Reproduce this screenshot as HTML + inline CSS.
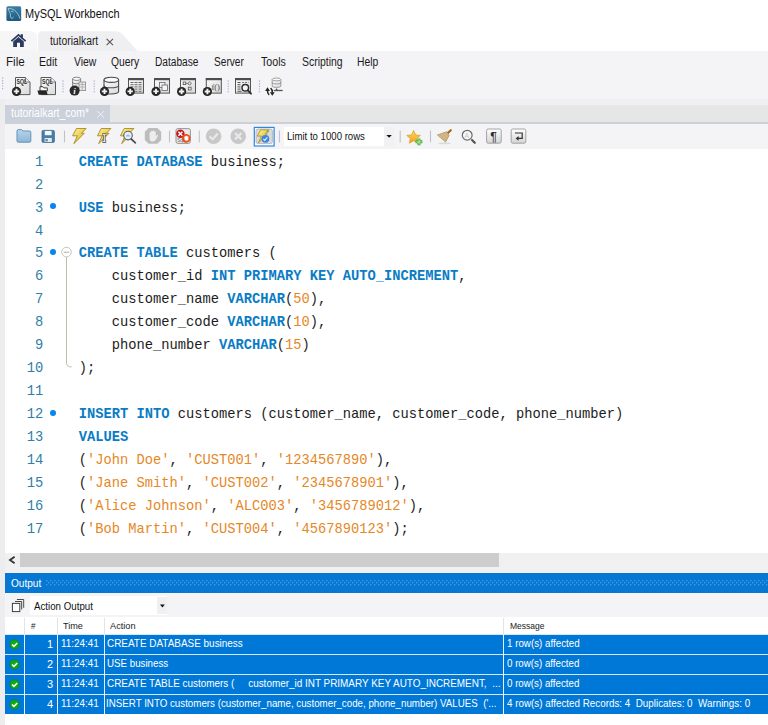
<!DOCTYPE html>
<html>
<head>
<meta charset="utf-8">
<title>MySQL Workbench</title>
<style>
html,body{margin:0;padding:0;}
body{width:768px;height:725px;position:relative;overflow:hidden;background:#fff;font-family:"Liberation Sans",sans-serif;font-size:12px;color:#1a1a1a;}
.abs{position:absolute;}
.t{position:absolute;white-space:pre;line-height:1;transform-origin:0 0;}
/* title */
#title{left:26px;top:8px;font-size:12px;color:#111;}
/* tabs */
#hometab{left:0;top:31px;width:36.8px;height:20px;background:#f6f6f7;border-top-right-radius:6px;}
#tab2{left:37px;top:31px;}
#tab2txt{left:50px;top:35px;font-size:12px;color:#222;}
#tab2x{left:105px;top:33px;font-size:14px;color:#555;}
/* menubar */
#menubar{left:0;top:51px;width:768px;height:48px;background:#f4f4f6;}
.menu{top:59px;font-size:12px;color:#1a1a1a;}
#strip0{left:0;top:99px;width:768px;height:6px;background:#f0f0f2;}
#strip1{left:5px;top:105px;width:763px;height:17px;background:#e6e6e6;}
#strip2{left:5px;top:122px;width:763px;height:2px;background:#cbd0da;}
#edtab{left:5px;top:105px;width:105px;height:17px;background:#cbd0da;}
#edtabtxt{left:11px;top:107px;font-size:11.5px;color:#fff;}
#edtabx{left:96px;top:105px;font-size:13px;color:#e9ecf2;}
#edtool{left:5px;top:124px;width:763px;height:25px;background:#f4f4f6;}
#leftstrip{left:0;top:99px;width:5px;height:626px;background:#ededef;}
/* editor */
#gutterL{display:none;}
#editor{left:5px;top:149px;width:763px;height:404px;background:#fff;}
.ln,.code{position:absolute;white-space:pre;font-family:"Liberation Mono",monospace;font-size:13.75px;line-height:23px;height:23px;}
.ln{color:#2f80a8;text-align:right;left:0;width:38.3px;}
.code{left:73.7px;color:#1c1c1c;}
.k{color:#0a7cc6;font-weight:bold;}
.n{color:#e6871f;}
.s{color:#e6871f;}
.dot{position:absolute;width:5.8px;height:5.8px;border-radius:50%;background:#0a84f0;left:45.2px;}
/* bottom */
#hscroll{left:5px;top:553px;width:768px;height:14px;background:#f0f0f0;}
#hthumb{left:20px;top:553px;width:479px;height:14px;background:#cdcdcd;}
#gap{left:5px;top:567px;width:763px;height:6px;background:#f1f1f1;}
#outleft{display:none;}
#outhdr{left:5px;top:573px;width:763px;height:20px;background:#0678d4;}
#outtxt{left:11px;top:577px;font-size:11.5px;color:#fff;}
#actrow{left:5px;top:593px;width:763px;height:24px;background:#f4f4f6;}
#combo{left:30px;top:596px;width:137px;height:19px;background:#fff;}
#combotxt{left:34px;top:600px;font-size:11px;color:#111;}
#tblhdr{left:5px;top:617px;width:763px;height:17px;background:#fff;}
.th{top:622px;font-size:9.5px;color:#222;}
.row{left:5px;width:763px;height:19px;background:#0078d7;}
.td{font-size:11px;color:#fff;}
#below{left:5px;top:714px;width:763px;height:11px;background:#fff;}
.vsep{position:absolute;top:634px;height:80px;width:1px;background:#e8f1fb;}
</style>
</head>
<body>
<!-- title bar -->
<svg class="abs" style="left:6px;top:6px" width="16" height="16" viewBox="0 0 16 16">
<defs><linearGradient id="gi" x1="0" y1="0" x2="0" y2="1"><stop offset="0" stop-color="#3b80a9"/><stop offset="1" stop-color="#1e597b"/></linearGradient></defs>
<rect x="0.4" y="0.2" width="14.8" height="14.8" rx="1.6" fill="url(#gi)"/>
<path d="M2.3 2.7 C3.5 2.1 6 2.5 8.5 4.3 C11 6.1 12.8 9 13.9 12.3 M2.3 2.7 C2.8 5 4 6.5 4.3 7.7 C4.6 9 4.3 10.5 4.9 11.6 C5.3 12.4 6 12.9 6.3 12.5 C6.7 12 6.4 11.4 7.2 11.2 M5.4 5.4 C6.2 5 7 5.3 7.4 5.9" fill="none" stroke="#b9d3e3" stroke-width="0.8" stroke-linecap="round"/>
</svg>
<div class="t" id="title" style="left:25.29px;top:7.84px;font-size:12px;transform:scaleX(0.9143)">MySQL Workbench</div>

<!-- tabs -->
<div class="abs" id="hometab"></div>
<svg class="abs" style="left:10px;top:33px" width="17" height="15" viewBox="0 0 17 15">
<path d="M8.5 0.8 L0.8 7.6 L2 8.8 L8.5 3 L15 8.8 L16.2 7.6 L12.9 4.7 L12.9 1.2 L10.7 1.2 L10.7 2.8 Z" fill="#2b3b5f"/>
<path d="M3.2 8.6 L8.5 4 L13.8 8.6 L13.8 14 L10 14 L10 9.8 L7 9.8 L7 14 L3.2 14 Z" fill="#2b3b5f"/>
</svg>
<svg class="abs" id="tab2" width="102" height="20" viewBox="0 0 102 20">
<path d="M1 20 L1 5 Q1 0.3 5.5 0.3 L79 0.3 Q83 0.3 85.5 3.2 L100.5 20 Z" fill="#efeff1"/>
</svg>
<div class="t" id="tab2txt" style="left:49.78px;top:34.84px;font-size:12px;transform:scaleX(0.8610)">tutorialkart</div>
<svg class="abs" style="left:105px;top:37px" width="10" height="10" viewBox="0 0 10 10"><path d="M1.6 1.8 L8 8.2 M8 1.8 L1.6 8.2" stroke="#555" stroke-width="1.1"/></svg>

<!-- menubar + toolbar -->
<div class="abs" id="menubar"></div>
<div class="t menu" style="left:5.83px;top:55.64px;font-size:12px;transform:scaleX(0.9690)">File</div>
<div class="t menu" style="left:38.72px;top:55.64px;font-size:12px;transform:scaleX(0.8810)">Edit</div>
<div class="t menu" style="left:73.70px;top:55.64px;font-size:12px;transform:scaleX(0.8660)">View</div>
<div class="t menu" style="left:111.07px;top:55.64px;font-size:12px;transform:scaleX(0.8594)">Query</div>
<div class="t menu" style="left:154.85px;top:55.64px;font-size:12px;transform:scaleX(0.8462)">Database</div>
<div class="t menu" style="left:214.28px;top:55.64px;font-size:12px;transform:scaleX(0.8432)">Server</div>
<div class="t menu" style="left:261.38px;top:55.64px;font-size:12px;transform:scaleX(0.8881)">Tools</div>
<div class="t menu" style="left:301.57px;top:55.64px;font-size:12px;transform:scaleX(0.8681)">Scripting</div>
<div class="t menu" style="left:357.14px;top:55.64px;font-size:12px;transform:scaleX(0.8602)">Help</div>
<!--TB1S-->
<svg class="abs" style="left:0;top:72px" width="768" height="30" viewBox="0 72 768 30">
<defs>
<linearGradient id="gd" x1="0" y1="0" x2="1" y2="1"><stop offset="0" stop-color="#fbfbfb"/><stop offset="1" stop-color="#d9d9d9"/></linearGradient>
<g id="plus"><circle r="4.6" fill="#262626"/><path d="M-2.7 0 H2.7 M0 -2.7 V2.7" stroke="#f2f2f2" stroke-width="1.9"/></g>
<g id="cyl"><path d="M0 2.6 V14.2 C0 17.6 14.6 17.6 14.6 14.2 V2.6" fill="url(#gd)" stroke="#4a4a4a" stroke-width="1.1"/><ellipse cx="7.3" cy="2.6" rx="7.3" ry="2.6" fill="#fafafa" stroke="#4a4a4a" stroke-width="1.1"/><path d="M0 8.2 C0 11.4 14.6 11.4 14.6 8.2" fill="none" stroke="#4a4a4a" stroke-width="1.1"/></g>
<g id="win"><rect x="0.5" y="0.5" width="15" height="14.6" fill="url(#gd)" stroke="#555" stroke-width="1"/><rect x="0" y="0" width="16" height="2.2" fill="#4d4d4d"/></g>
</defs>
<!-- grips / separators -->
<g stroke="#9fb4cc" stroke-width="1.2" stroke-dasharray="1.2 1.4">
<path d="M2.6 77.6 V90.5"/><path d="M63 80.6 V93"/><path d="M94.2 80.6 V93"/><path d="M228.2 80.6 V93"/><path d="M259.5 80.6 V93"/>
</g>
<!-- 1: SQL doc + -->
<path d="M15.5 77.5 H25.5 L30 82 V94.6 H15.5 Z" fill="url(#gd)" stroke="#5a5a5a" stroke-width="1"/>
<path d="M25.5 77.5 V82 H30" fill="#eee" stroke="#5a5a5a" stroke-width="0.8"/>
<text x="16.5" y="84.4" font-family="Liberation Sans, sans-serif" font-weight="bold" font-size="6.8" fill="#2a2a2a" textLength="10.6" lengthAdjust="spacingAndGlyphs">SQL</text>
<use href="#plus" x="16.5" y="91.4"/>
<!-- 2: SQL doc folder -->
<path d="M41 77.5 H51 L55.5 82 V94.6 H41 Z" fill="url(#gd)" stroke="#5a5a5a" stroke-width="1"/>
<path d="M51 77.5 V82 H55.5" fill="#eee" stroke="#5a5a5a" stroke-width="0.8"/>
<text x="42" y="84.4" font-family="Liberation Sans, sans-serif" font-weight="bold" font-size="6.8" fill="#2a2a2a" textLength="10.6" lengthAdjust="spacingAndGlyphs">SQL</text>
<path d="M40 91 V86.7 H43 L43.9 87.9 H47.3 V91 Z" fill="#fafafa" stroke="#2a2a2a" stroke-width="0.9"/>
<path d="M37.4 90.6 H46.4 L47.7 94.7 H38.7 Z" fill="#262626"/>
<!-- 3: db info -->
<g transform="translate(72.6 77.2) scale(0.55 0.62)"><use href="#cyl"/></g>
<rect x="79" y="82" width="6.6" height="8.6" fill="#e9e9e9" stroke="#8a8a8a" stroke-width="0.8"/>
<path d="M79 84.5 H85.6 M79 87 H85.6 M82.3 82 V90.6" stroke="#9a9a9a" stroke-width="0.6"/>
<circle cx="74.6" cy="90.6" r="5" fill="#2b2b2b"/>
<text x="73.2" y="93.9" font-family="Liberation Serif, serif" font-style="italic" font-weight="bold" font-size="9" fill="#f4f4f4">i</text>
<!-- 4: db + -->
<g transform="translate(104 77.2)"><use href="#cyl"/></g>
<use href="#plus" x="104.5" y="91.4"/>
<!-- 5: table + -->
<g transform="translate(128 78)"><use href="#win"/></g>
<path d="M130.5 82.5 H141.5 M130.5 84.7 H141.5 M130.5 86.9 H141.5 M130.5 89.1 H141.5 M130.5 91.3 H141.5" stroke="#6a6a6a" stroke-width="1" stroke-dasharray="3 1"/>
<use href="#plus" x="130.2" y="91.4"/>
<!-- 6: view + -->
<g transform="translate(154 78)"><use href="#win"/></g>
<rect x="159.5" y="82.5" width="5.5" height="5" fill="#f4f4f4" stroke="#666" stroke-width="0.8"/>
<rect x="162" y="85" width="5.5" height="5.5" fill="#f4f4f4" stroke="#666" stroke-width="0.8"/>
<use href="#plus" x="156" y="91.4"/>
<!-- 7: procedure + -->
<g transform="translate(180 78)"><use href="#win"/></g>
<rect x="183.2" y="82" width="2.6" height="2.6" fill="none" stroke="#555" stroke-width="0.8"/>
<circle cx="189.6" cy="83.4" r="1.5" fill="none" stroke="#555" stroke-width="0.8"/>
<rect x="188.3" y="87.2" width="2.8" height="2.8" fill="none" stroke="#555" stroke-width="0.8"/>
<path d="M185.8 83.4 H188" stroke="#555" stroke-width="0.7"/>
<use href="#plus" x="181.6" y="91.5"/>
<!-- 8: function + -->
<g transform="translate(205.8 78)"><use href="#win"/></g>
<text x="211.4" y="89.6" font-family="Liberation Serif, serif" font-size="7.6" fill="#4a4a4a" textLength="8.6" lengthAdjust="spacingAndGlyphs">f()</text>
<use href="#plus" x="207.4" y="91.5"/>
<!-- 9: search table -->
<g transform="translate(235 78)"><use href="#win"/></g>
<path d="M237.5 82.5 H240.5 M237.5 84.7 H240.5 M237.5 86.9 H240.5 M237.5 89.1 H240.5 M237.5 91.3 H241.5" stroke="#555" stroke-width="1"/>
<path d="M242 82.5 H248.5" stroke="#777" stroke-width="1" stroke-dasharray="2 1"/>
<circle cx="245.3" cy="87.8" r="3.3" fill="#f6f6f6" stroke="#2e2e2e" stroke-width="1.5"/>
<path d="M247.8 90.4 L251 93.6" stroke="#2e2e2e" stroke-width="2" stroke-linecap="round"/>
<!-- 10: reconnect -->
<g transform="translate(272.2 78) scale(0.59 0.56)" opacity="0.8"><use href="#cyl"/></g>
<path d="M273.8 90.5 H282.7" stroke="#555" stroke-width="1.3"/>
<path d="M275.2 90.6 L276.6 88 L278 90.6 Z" fill="#555"/>
<path d="M265.1 90.9 L267.5 87.2 L269.9 90.9 Z" fill="#222"/>
<path d="M267.5 90.4 Q267.4 93.4 269.2 94.8" fill="none" stroke="#222" stroke-width="1.5"/>
<path d="M269.9 92.2 L272.3 95.8 L274.7 92.2 Z" fill="#222"/>
<path d="M272.3 92.6 Q272.4 89.6 270.6 88.2" fill="none" stroke="#222" stroke-width="1.5"/>
</svg>
<!--TB1E-->

<div class="abs" id="strip0"></div>
<div class="abs" id="leftstrip"></div>
<div class="abs" id="strip1"></div>
<div class="abs" id="edtab"></div>
<div class="t" id="edtabtxt" style="left:11.03px;top:106.84px;font-size:12px;transform:scaleX(0.8659)">tutorialkart_com*</div>
<svg class="abs" style="left:95px;top:109px" width="11" height="10" viewBox="0 0 11 10"><path d="M2.2 2 L9 8.6 M9 2 L2.2 8.6" stroke="#eef0f5" stroke-width="1"/></svg>
<div class="abs" id="strip2"></div>
<div class="abs" id="edtool"></div>
<!--TB2S-->
<svg class="abs" style="left:0;top:124px" width="768" height="25" viewBox="0 124 768 25">
<defs>
<linearGradient id="gbolt" x1="0" y1="0" x2="1" y2="1"><stop offset="0" stop-color="#fff3a0"/><stop offset="0.5" stop-color="#edd050"/><stop offset="1" stop-color="#c9a227"/></linearGradient>
<linearGradient id="gfold" x1="0" y1="0" x2="0" y2="1"><stop offset="0" stop-color="#b9d5ea"/><stop offset="1" stop-color="#8db6d6"/></linearGradient>
<linearGradient id="gbtn" x1="0" y1="0" x2="0" y2="1"><stop offset="0" stop-color="#ffffff"/><stop offset="1" stop-color="#d4d4d4"/></linearGradient>
<linearGradient id="gstar" x1="0" y1="0" x2="0" y2="1"><stop offset="0" stop-color="#ffd95a"/><stop offset="1" stop-color="#f0a020"/></linearGradient>
<g id="bolt"><path d="M4.6 0.5 H14.3 L9.7 5.3 H12.4 L2.1 15.7 L5.5 7.8 H0.8 Z" fill="url(#gbolt)" stroke="#a8892c" stroke-width="0.9" stroke-linejoin="round"/></g>
</defs>
<!-- separators -->
<g stroke="#c2c2c4" stroke-width="1.1">
<path d="M64.5 130.6 V142.4"/><path d="M169.5 130.6 V142.4"/><path d="M199.3 130.6 V142.4"/><path d="M279.4 130.6 V142.4"/><path d="M400.2 130.6 V142.4"/><path d="M430.5 130.6 V142.4"/>
</g>
<!-- folder -->
<path d="M17 131 Q17 129.6 18.4 129.6 H21.6 L23 131 H29.6 Q30.8 131 30.8 132.2 V141 Q30.8 142.2 29.6 142.2 H18.2 Q17 142.2 17 141 Z" fill="url(#gfold)" stroke="#6393ba" stroke-width="1"/>
<!-- save -->
<rect x="42" y="130.4" width="12.4" height="12" rx="1.2" fill="#4b7ea6" stroke="#3c6c92" stroke-width="0.8"/>
<rect x="44.8" y="131" width="6.8" height="4.2" fill="#f4f7fa"/>
<rect x="44.6" y="138" width="7.2" height="4" fill="#e6e9ec"/>
<rect x="45.4" y="139" width="2.4" height="2.4" fill="#6a8aa6"/>
<!-- bolt 1 -->
<g transform="translate(71.8 128)"><use href="#bolt"/></g>
<!-- bolt 2 with I -->
<g transform="translate(96.6 128)"><use href="#bolt"/></g>
<path d="M102.4 134.6 H106.2 M104.3 134.6 V141.6 M102.4 141.6 H106.2" stroke="#5a5a5a" stroke-width="2.6" fill="none"/>
<path d="M102.9 134.6 H105.7 M104.3 134.6 V141.6 M102.9 141.6 H105.7" stroke="#f2f2f2" stroke-width="1" fill="none"/>
<!-- bolt 3 with magnifier -->
<g transform="translate(119.6 128)"><use href="#bolt"/></g>
<circle cx="128" cy="135.6" r="4.3" fill="#e2eefa" stroke="#5c5c5c" stroke-width="1.1"/>
<path d="M125.6 136.6 Q128 132.6 130.4 136.6" fill="#8fbce6" stroke="none"/>
<path d="M131.2 139 L135.4 142.8" stroke="#4c4c4c" stroke-width="1.7" stroke-linecap="round"/>
<!-- stop (disabled) -->
<path d="M148.6 128 H157.4 L161.2 131.8 V140 L157.4 143.8 H148.6 L144.8 140 V131.8 Z" fill="#bdbdbd"/>
<path d="M149.6 137 V132.4 Q150.3 131.6 151 132.4 V131.2 Q151.8 130.4 152.6 131.2 V131 Q153.4 130.2 154.2 131 V131.8 Q155 131 155.8 131.8 V136.4 L157 134.8 Q158 134.4 158 135.6 L156 139.6 Q155 141.4 153 141.4 H152 Q149.6 141.4 149.6 139 Z" fill="#ededed"/>
<!-- stop on error toggle -->
<rect x="176" y="128.6" width="14.4" height="14.8" rx="1.8" fill="#e9e9e9" stroke="#8c8c8c" stroke-width="0.9"/>
<text x="177" y="141.8" font-family="Liberation Sans, sans-serif" font-size="5" fill="#777">Sql</text>
<circle cx="180.4" cy="133.7" r="4.2" fill="#c4141c"/>
<path d="M178.4 131.8 L182.4 135.8 M182.4 131.8 L178.4 135.8" stroke="#fff" stroke-width="1.5"/>
<circle cx="186.2" cy="138.4" r="4.3" fill="#e8501c"/>
<path d="M184.4 139 V136.6 H185.4 V136 H186.4 V135.8 H187.4 V136.4 H188.4 V139.4 Q188.4 140.8 186.6 140.8 Q184.4 140.8 184.4 139 Z" fill="#fff"/>
<!-- check / x disabled -->
<circle cx="213.6" cy="136.2" r="7.8" fill="#c8c8c8"/>
<path d="M209.6 136.4 L212.6 139.2 L217.8 133.4" fill="none" stroke="#e8e8e8" stroke-width="2.2"/>
<circle cx="238.2" cy="136.2" r="7.8" fill="#c8c8c8"/>
<path d="M235 133 L241.4 139.4 M241.4 133 L235 139.4" stroke="#e8e8e8" stroke-width="2.2"/>
<!-- toggle autocommit -->
<rect x="254.3" y="127.4" width="19.8" height="18.6" fill="#fff" stroke="#2f86e2" stroke-width="1.2"/>
<rect x="256" y="129" width="16.4" height="14.6" rx="2" fill="#dadada" stroke="#b4b4b4" stroke-width="0.9"/>
<g transform="translate(256.6 129.4) scale(0.86)"><use href="#bolt"/></g>
<circle cx="267.8" cy="131.6" r="1.1" fill="#4ec04a"/>
<circle cx="265.4" cy="138.8" r="3.9" fill="#3a86e0"/>
<path d="M263.4 139 L264.8 140.4 L267.4 137.4" fill="none" stroke="#dfeeff" stroke-width="1.2"/>
<!-- combo -->
<rect x="283.8" y="127" width="111" height="19" fill="#fff"/>
<rect x="384" y="127" width="10.8" height="19" fill="#f1f1f1"/>
<path d="M386.4 135 H391.8 L389.1 137.8 Z" fill="#111"/>
<!-- star + -->
<path d="M413.6 130.4 L415.6 135 L420.4 135.4 L416.8 138.6 L417.9 143.2 L413.6 140.7 L409.3 143.2 L410.4 138.6 L406.8 135.4 L411.6 135 Z" fill="url(#gstar)" stroke="#d89a1c" stroke-width="0.7" stroke-linejoin="round"/>
<path d="M419 138.4 V145.2 M415.6 141.8 H422.4" stroke="#4aa83c" stroke-width="3"/>
<path d="M419 139.2 V144.4 M416.4 141.8 H421.6" stroke="#a8e494" stroke-width="1.3"/>
<!-- broom -->
<ellipse cx="444.5" cy="143.3" rx="6.5" ry="0.9" fill="#d9d9d9"/>
<path d="M447.2 133.6 L450.8 130.2" stroke="#a86a1c" stroke-width="2.2" stroke-linecap="round"/>
<path d="M437.4 135 L446.6 131.8 L449.2 135.2 L445.6 142 Z" fill="#d8bd8c" stroke="#a8895a" stroke-width="0.7" stroke-linejoin="round"/>
<path d="M440 134.4 L446 140.6 M442.4 133.6 L447 138.4 M444.6 132.8 L448 136.4" stroke="#b2925e" stroke-width="0.6"/>
<!-- find magnifier -->
<circle cx="467.2" cy="135.2" r="4.9" fill="#f8f8f8" stroke="#6a6a6a" stroke-width="1.2"/>
<text x="464.6" y="138" font-family="Liberation Sans, sans-serif" font-size="7" fill="#c4c4c4">A</text>
<path d="M470.6 138.8 L472.4 140.4" stroke="#d8a060" stroke-width="1.8"/>
<path d="M472.2 140.2 L474.8 142.8" stroke="#555" stroke-width="2.2" stroke-linecap="round"/>
<!-- pilcrow button -->
<rect x="486.6" y="129" width="14.6" height="14.2" rx="1.6" fill="url(#gbtn)" stroke="#9a9a9a" stroke-width="0.9"/>
<text x="490.2" y="140.8" font-family="Liberation Sans, sans-serif" font-size="12.5" fill="#2a2a2a">¶</text>
<!-- wrap button -->
<rect x="511.2" y="129" width="14.6" height="14.2" rx="1.6" fill="url(#gbtn)" stroke="#9a9a9a" stroke-width="0.9"/>
<path d="M515 133 H522.2 V138.4 H518" fill="none" stroke="#333" stroke-width="1.2"/>
<path d="M518.6 136 V140.8 L515.6 138.4 Z" fill="#333"/>
</svg>
<div class="t" id="limittxt" style="left:287.33px;top:130.94px;font-size:11px;color:#111;transform:scaleX(0.8727)">Limit to 1000 rows</div>
<!--TB2E-->

<!-- editor -->
<div class="abs" id="gutterL"></div>
<div class="abs" id="editor">
<div class="ln" style="top:1.75px">1</div>
<div class="code" style="top:1.75px"><span class="k">CREATE DATABASE</span> business;</div>
<div class="ln" style="top:24.68px">2</div>
<div class="ln" style="top:47.61px">3</div>
<div class="code" style="top:47.61px"><span class="k">USE</span> business;</div>
<div class="dot" style="top:54.36px"></div>
<div class="ln" style="top:70.54px">4</div>
<div class="ln" style="top:93.47px">5</div>
<div class="code" style="top:93.47px"><span class="k">CREATE TABLE</span> customers (</div>
<div class="dot" style="top:100.22px"></div>
<div class="ln" style="top:116.40px">6</div>
<div class="code" style="top:116.40px">    customer_id <span class="k">INT PRIMARY KEY AUTO_INCREMENT</span>,</div>
<div class="ln" style="top:139.33px">7</div>
<div class="code" style="top:139.33px">    customer_name <span class="k">VARCHAR</span>(<span class="n">50</span>),</div>
<div class="ln" style="top:162.26px">8</div>
<div class="code" style="top:162.26px">    customer_code <span class="k">VARCHAR</span>(<span class="n">10</span>),</div>
<div class="ln" style="top:185.19px">9</div>
<div class="code" style="top:185.19px">    phone_number <span class="k">VARCHAR</span>(<span class="n">15</span>)</div>
<div class="ln" style="top:208.12px">10</div>
<div class="code" style="top:208.12px">);</div>
<div class="ln" style="top:231.05px">11</div>
<div class="ln" style="top:253.98px">12</div>
<div class="code" style="top:253.98px"><span class="k">INSERT INTO</span> customers (customer_name, customer_code, phone_number)</div>
<div class="dot" style="top:260.73px"></div>
<div class="ln" style="top:276.91px">13</div>
<div class="code" style="top:276.91px"><span class="k">VALUES</span></div>
<div class="ln" style="top:299.84px">14</div>
<div class="code" style="top:299.84px">(<span class="s">'John Doe'</span>, <span class="s">'CUST001'</span>, <span class="s">'1234567890'</span>),</div>
<div class="ln" style="top:322.77px">15</div>
<div class="code" style="top:322.77px">(<span class="s">'Jane Smith'</span>, <span class="s">'CUST002'</span>, <span class="s">'2345678901'</span>),</div>
<div class="ln" style="top:345.70px">16</div>
<div class="code" style="top:345.70px">(<span class="s">'Alice Johnson'</span>, <span class="s">'ALC003'</span>, <span class="s">'3456789012'</span>),</div>
<div class="ln" style="top:368.63px">17</div>
<div class="code" style="top:368.63px">(<span class="s">'Bob Martin'</span>, <span class="s">'CUST004'</span>, <span class="s">'4567890123'</span>);</div>
<svg class="abs" style="left:55px;top:96px" width="14" height="126" viewBox="60 245 14 126">
<path d="M66.5 257 V363.6 Q66.5 365 68 365.8 L69.4 366.8 H71.6" fill="none" stroke="#bcbcb0" stroke-width="1"/>
<circle cx="66.5" cy="252.1" r="4.8" fill="#fff" stroke="#c6c6ba" stroke-width="1"/>
<path d="M63.8 252.2 H69.3" stroke="#b0b0a6" stroke-width="1"/>
</svg>
</div>

<!-- bottom -->
<div class="abs" id="hscroll"></div>
<div class="abs" id="hthumb"></div>
<div class="abs" id="gap"></div>
<div class="abs" id="outleft"></div>
<div class="abs" id="outhdr"></div>
<div class="t" id="outtxt" style="left:10.84px;top:577.69px;font-size:11px;transform:scaleX(0.9138)">Output</div>
<div class="abs" id="actrow"></div>
<div class="abs" id="combo"></div>
<div class="t" id="combotxt" style="left:34.00px;top:600.69px;font-size:11px;transform:scaleX(0.8839)">Action Output</div>
<svg class="abs" style="left:8px;top:555px" width="8" height="10" viewBox="0 0 8 10"><path d="M6.6 1.8 L2 5.1 L6.6 8.3" fill="none" stroke="#333" stroke-width="1.8"/></svg>
<svg class="abs" style="left:46px;top:580px" width="722" height="6" viewBox="0 0 722 6">
<defs><pattern id="dots" x="0" y="0" width="4" height="4" patternUnits="userSpaceOnUse"><rect x="0" y="0" width="1.4" height="1.4" fill="#4496e0"/><rect x="2" y="2" width="1.4" height="1.4" fill="#4496e0"/></pattern></defs>
<rect x="0" y="0" width="722" height="6" fill="url(#dots)"/></svg>
<svg class="abs" style="left:11px;top:598px" width="14" height="15" viewBox="0 0 14 15">
<path d="M5.9 1.5 H12.7 V9.8" fill="none" stroke="#4a4a4a" stroke-width="1"/>
<path d="M4 3.5 H10.7 V11.5" fill="none" stroke="#444" stroke-width="1"/>
<rect x="1.4" y="5.4" width="7.4" height="8.2" fill="#fdfdfd" stroke="#3c3c3c" stroke-width="1"/>
</svg>
<div class="abs" style="left:157px;top:597px;width:10px;height:17px;background:#f0f0f0"></div>
<svg class="abs" style="left:160px;top:604px" width="6" height="4" viewBox="0 0 6 4"><path d="M0 0.5 H4.8 L2.4 3.4 Z" fill="#111"/></svg>
<div class="abs" id="tblhdr"></div>
<div class="t th" style="left:30.50px;top:622.08px;font-size:9px;transform:scaleX(0.9000)">#</div>
<div class="t th" style="left:63.05px;top:622.08px;font-size:9px;transform:scaleX(1.0105)">Time</div>
<div class="t th" style="left:110.00px;top:622.08px;font-size:9px;transform:scaleX(1.0204)">Action</div>
<div class="t th" style="left:509.99px;top:622.08px;font-size:9px;transform:scaleX(0.9465)">Message</div>
<div class="abs" style="left:24px;top:618px;width:1px;height:17px;background:#e3e3e3"></div>
<div class="abs" style="left:57px;top:618px;width:1px;height:17px;background:#e3e3e3"></div>
<div class="abs" style="left:104px;top:618px;width:1px;height:17px;background:#e3e3e3"></div>
<div class="abs" style="left:503px;top:618px;width:1px;height:17px;background:#e3e3e3"></div>
<div class="abs" style="left:5px;top:634px;width:763px;height:80px;background:#d6e8f9"></div>
<div class="abs row" style="top:635px"></div>
<svg class="abs" style="left:8.7px;top:639px" width="11" height="11" viewBox="0 0 11 11"><circle cx="5.5" cy="5.4" r="4.9" fill="#0b8a14"/><circle cx="5.5" cy="5.4" r="4.1" fill="#0fab16"/><path d="M3 5.5 L4.9 7.3 L8.3 4" fill="none" stroke="#fff" stroke-width="1.6"/></svg>
<div class="t td" style="left:26px;width:27px;text-align:right;top:639px">1</div>
<div class="t td" style="left:61.03px;top:637.69px;font-size:11px;transform:scaleX(0.8982)">11:24:41</div>
<div class="t td" style="left:106.85px;top:637.69px;font-size:11px;transform:scaleX(0.9030)">CREATE DATABASE business</div>
<div class="t td" style="left:507.03px;top:637.69px;font-size:11px;transform:scaleX(0.8885)">1 row(s) affected</div>
<div class="abs row" style="top:655px"></div>
<svg class="abs" style="left:8.7px;top:659px" width="11" height="11" viewBox="0 0 11 11"><circle cx="5.5" cy="5.4" r="4.9" fill="#0b8a14"/><circle cx="5.5" cy="5.4" r="4.1" fill="#0fab16"/><path d="M3 5.5 L4.9 7.3 L8.3 4" fill="none" stroke="#fff" stroke-width="1.6"/></svg>
<div class="t td" style="left:26px;width:27px;text-align:right;top:659px">2</div>
<div class="t td" style="left:61.03px;top:657.69px;font-size:11px;transform:scaleX(0.8982)">11:24:41</div>
<div class="t td" style="left:106.84px;top:657.69px;font-size:11px;transform:scaleX(0.8853)">USE business</div>
<div class="t td" style="left:507.26px;top:657.69px;font-size:11px;transform:scaleX(0.8857)">0 row(s) affected</div>
<div class="abs row" style="top:675px"></div>
<svg class="abs" style="left:8.7px;top:679px" width="11" height="11" viewBox="0 0 11 11"><circle cx="5.5" cy="5.4" r="4.9" fill="#0b8a14"/><circle cx="5.5" cy="5.4" r="4.1" fill="#0fab16"/><path d="M3 5.5 L4.9 7.3 L8.3 4" fill="none" stroke="#fff" stroke-width="1.6"/></svg>
<div class="t td" style="left:26px;width:27px;text-align:right;top:679px">3</div>
<div class="t td" style="left:61.03px;top:677.69px;font-size:11px;transform:scaleX(0.8982)">11:24:41</div>
<div class="t td" style="left:106.85px;top:677.69px;font-size:11px;transform:scaleX(0.9022)">CREATE TABLE customers (     customer_id INT PRIMARY KEY AUTO_INCREMENT,  ...</div>
<div class="t td" style="left:507.26px;top:677.69px;font-size:11px;transform:scaleX(0.8857)">0 row(s) affected</div>
<div class="abs row" style="top:695px"></div>
<svg class="abs" style="left:8.7px;top:699px" width="11" height="11" viewBox="0 0 11 11"><circle cx="5.5" cy="5.4" r="4.9" fill="#0b8a14"/><circle cx="5.5" cy="5.4" r="4.1" fill="#0fab16"/><path d="M3 5.5 L4.9 7.3 L8.3 4" fill="none" stroke="#fff" stroke-width="1.6"/></svg>
<div class="t td" style="left:26px;width:27px;text-align:right;top:699px">4</div>
<div class="t td" style="left:61.03px;top:697.69px;font-size:11px;transform:scaleX(0.8982)">11:24:41</div>
<div class="t td" style="left:106.41px;top:697.69px;font-size:11px;transform:scaleX(0.8869)">INSERT INTO customers (customer_name, customer_code, phone_number) VALUES  ('...</div>
<div class="t td" style="left:507.48px;top:697.69px;font-size:11px;transform:scaleX(0.8936)">4 row(s) affected Records: 4  Duplicates: 0  Warnings: 0</div>
<div class="vsep" style="left:24px"></div>
<div class="vsep" style="left:57px"></div>
<div class="vsep" style="left:104px"></div>
<div class="vsep" style="left:503px"></div>
<div class="abs" id="below"></div>
</body>
</html>
